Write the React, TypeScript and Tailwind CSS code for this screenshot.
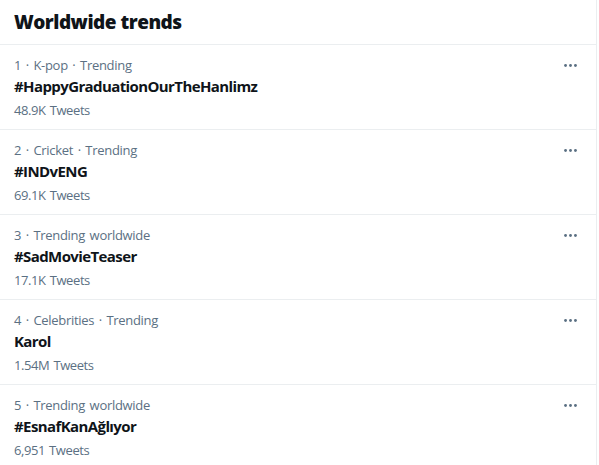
const trends = [
  { rank: 1, context: "K-pop · Trending", name: "#HappyGraduationOurTheHanlimz", count: "48.9K Tweets" },
  { rank: 2, context: "Cricket · Trending", name: "#INDvENG", count: "69.1K Tweets" },
  { rank: 3, context: "Trending worldwide", name: "#SadMovieTeaser", count: "17.1K Tweets" },
  { rank: 4, context: "Celebrities · Trending", name: "Karol", count: "1.54M Tweets" },
  { rank: 5, context: "Trending worldwide", name: "#EsnafKanAğlıyor", count: "6,951 Tweets" },
];

function MoreIcon() {
  return (
    <svg viewBox="0 0 24 24" className="w-[17px] h-[17px] fill-[#5b7083]">
      <circle cx="5" cy="12" r="2" />
      <circle cx="12" cy="12" r="2" />
      <circle cx="19" cy="12" r="2" />
    </svg>
  );
}

export default function App() {
  return (
    <main
      className="w-[597px] bg-white border-r border-[#ebeef0] text-[#0f1419]"
      style={{ fontFamily: '"Open Sans", "Noto Sans", sans-serif' }}
    >
      {/* Header */}
      <div className="h-[45px] flex items-center px-[14px] border-b border-[#ebeef0]">
        <h2 className="text-[19px] font-extrabold leading-6 tracking-[-0.5px]">Worldwide trends</h2>
      </div>

      {/* Trend rows */}
      {trends.map((t) => (
        <div key={t.rank} className="flex justify-between pl-[14px] pr-[17px] pt-3 pb-[11px] border-b border-[#ebeef0]">
          <div>
            <div className="text-[13px] leading-4 text-[#5b7083] tracking-[-0.3px] [word-spacing:1.5px]">
              {t.rank} · {t.context}
            </div>
            <div className="mt-[3px] text-[15px] leading-5 font-bold tracking-[-0.6px]">{t.name}</div>
            <div className="mt-[6px] text-[13px] leading-4 text-[#5b7083] tracking-[-0.4px] [word-spacing:1px]">
              {t.count}
            </div>
          </div>
          <div>
            <MoreIcon />
          </div>
        </div>
      ))}
    </main>
  );
}
